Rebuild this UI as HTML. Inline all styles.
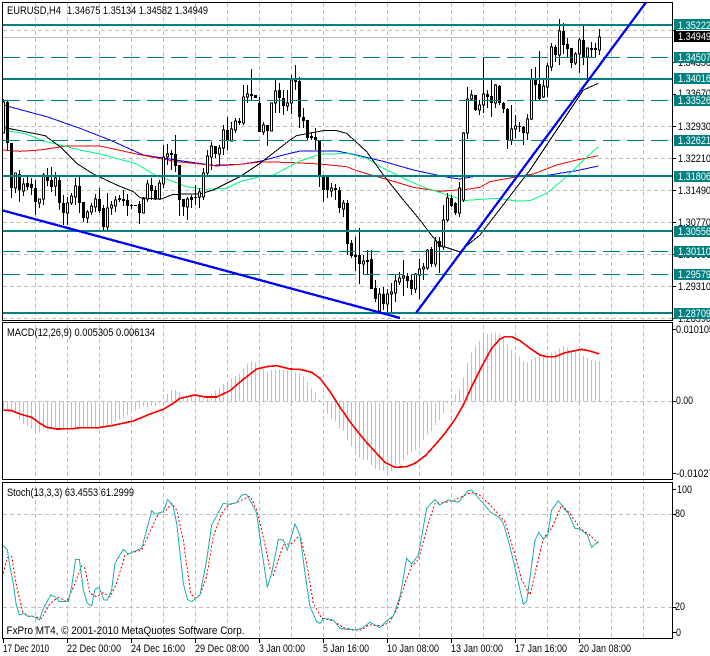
<!DOCTYPE html>
<html><head><meta charset="utf-8"><style>
html,body{margin:0;padding:0;background:#fff;width:710px;height:656px;overflow:hidden}
svg{display:block}
text{font-family:"Liberation Sans",sans-serif;font-size:11px;fill:#000}
.w{fill:#fff}
</style></head><body>
<svg width="710" height="656" viewBox="0 0 710 656" xmlns="http://www.w3.org/2000/svg">
<defs><clipPath id="c"><rect x="3" y="3" width="669" height="317"/></clipPath></defs>
<rect width="710" height="656" fill="#fff"/>
<g shape-rendering="crispEdges" fill="none">
<!-- grids -->
<path stroke="#c0c0c0" stroke-dasharray="4 3" d="M35.5 3V638M67.5 3V638M99.5 3V638M131.5 3V638M163.5 3V638M195.5 3V638M227.5 3V638M259.5 3V638M291.5 3V638M323.5 3V638M355.5 3V638M387.5 3V638M419.5 3V638M451.5 3V638M483.5 3V638M515.5 3V638M547.5 3V638M579.5 3V638M611.5 3V638M643.5 3V638"/>
<path stroke="#c0c0c0" stroke-dasharray="4 3" d="M3 30.5H672M3 126.5H672M3 158.5H672M3 190.5H672M3 222.5H672M3 254.5H672M3 286.5H672M3 318.5H672M3 401.5H672M3 514.5H672M3 607.5H672"/>
<path stroke="#c0c0c0" d="M3 37.5H672"/>
<!-- moving averages -->
<g transform="scale(.33333)" stroke-width="3">
<path stroke="#0000ff" d="M9 315L140 350L240 385L330 420L430 465L540 482L640 496L720 493L780 484L850 465L900 453L1010 453L1060 463L1150 484L1240 510L1300 523L1350 533L1380 537L1420 530L1620 530L1660 523L1730 512L1795 498"/>
<path stroke="#ff0000" d="M9 450L60 454L120 450L200 438L300 438L400 460L450 470L530 485L600 492L650 498L720 493L780 486L860 487L960 492L1040 500L1070 512L1110 524L1160 538L1240 562L1320 574L1400 568L1440 562L1470 545L1540 532L1600 522L1670 495L1730 480L1795 467"/>
<path stroke="#00ff7f" d="M9 390L80 402L130 423L180 435L240 450L300 462L360 478L410 492L465 525L500 537L560 560L620 568L680 565L720 545L780 530L820 525L900 483L960 463L1040 460L1100 475L1150 505L1220 540L1280 565L1360 590L1390 602L1440 598L1490 595L1550 603L1590 602L1640 580L1700 530L1740 490L1795 440"/>
<path stroke="#000" d="M9 382L60 392L135 407L180 440L230 490L280 522L350 555L400 575L420 593L480 598L520 583L600 582L640 570L720 530L780 490L870 420L890 407L970 392L1010 392L1040 400L1100 455L1150 525L1210 600L1260 660L1290 700L1320 736L1380 756L1385 750L1440 705L1490 640L1590 510L1650 420L1700 345L1750 270L1795 250"/>
</g>
<!-- candle wicks -->
<path stroke="#000" d="M3.5 99V133M7.5 100V150M11.5 143V198M15.5 173V193M19.5 170V202M23.5 178V196M27.5 175V190M31.5 178V195M35.5 180V215M39.5 199V208M43.5 173V205M47.5 168V186M51.5 167V192M55.5 172V196M59.5 175V210M63.5 195V225M67.5 197V225M71.5 193V205M75.5 178V205M79.5 175V213M83.5 202V222M87.5 210V223M91.5 203V215M95.5 194V212M99.5 188V213M103.5 205V232M107.5 193V232M111.5 201V215M115.5 196V212M119.5 195V202M123.5 190V206M127.5 194V216M131.5 204V209M139.5 201V224M143.5 197V213M147.5 180V202M151.5 178V200M155.5 186V200M159.5 180V200M163.5 145V188M167.5 144V165M171.5 150V170M175.5 135V172M179.5 165V216M183.5 199V216M187.5 197V220M191.5 195V208M195.5 185V205M199.5 188V208M203.5 168V200M207.5 150V175M211.5 142V170M215.5 146V158M219.5 145V165M223.5 125V155M227.5 117V150M231.5 122V140M235.5 118V133M239.5 118V125M243.5 85V125M247.5 85V103M251.5 69V100M255.5 95V98M259.5 97V132M263.5 122V135M267.5 125V146M271.5 103V131M275.5 80V113M279.5 83V113M283.5 90V115M287.5 90V111M291.5 75V114M295.5 65V90M299.5 77V128M303.5 108V128M307.5 120V141M311.5 132V140M315.5 128V150M319.5 140V187M323.5 175V202M327.5 175V198M331.5 183V197M335.5 184V200M339.5 187V213M343.5 200V217M347.5 200V255M351.5 240V258M355.5 237V271M359.5 228V284M363.5 255V275M367.5 250V275M371.5 250V289M375.5 280V302M379.5 288V313M383.5 287V310M387.5 289V313M391.5 283V313M395.5 274V302M399.5 272V285M403.5 260V296M407.5 273V288M411.5 275V295M415.5 273V293M419.5 259V299M423.5 263V280M427.5 249V270M431.5 247V267M435.5 237V267M439.5 237V273M443.5 205V250M447.5 193V222M451.5 195V207M455.5 202V215M459.5 182V217M463.5 132V202M467.5 87V139M471.5 90V101M475.5 95V111M479.5 100V115M483.5 57V113M487.5 90V108M491.5 78V117M495.5 84V108M499.5 85V105M503.5 102V113M507.5 108V149M511.5 105V145M515.5 115V138M519.5 122V132M523.5 126V145M527.5 114V140M531.5 69V120M535.5 67V100M539.5 51V100M543.5 78V98M547.5 63V97M551.5 43V71M555.5 45V62M559.5 19V65M563.5 23V54M567.5 38V57M571.5 48V68M575.5 52V65M579.5 38V73M583.5 25V65M587.5 48V83M591.5 42V58M595.5 43V58M599.5 29V55"/>
<!-- black bodies -->
<path stroke="#000" stroke-width="3" d="M7.5 102V143M11.5 143V188M19.5 174V190M27.5 183V187M31.5 184V188M35.5 188V202M47.5 175V181M51.5 180V187M59.5 180V203M63.5 203V213M79.5 186V203M83.5 202V218M99.5 199V211M103.5 208V227M119.5 198V200M123.5 199V201M127.5 200V206M131.5 205V206M135.5 205V206M139.5 204V213M151.5 185V191M155.5 190V199M171.5 153V155M175.5 154V166M179.5 165V200M183.5 199V207M191.5 197V200M195.5 197V198M215.5 146V154M227.5 130V140M239.5 121V123M251.5 94V96M255.5 95V98M259.5 103V132M267.5 125V131M279.5 90V98M283.5 98V106M295.5 80V82M299.5 81V117M303.5 117V121M307.5 120V138M311.5 136V138M315.5 137V140M319.5 140V176M323.5 175V190M327.5 175V190M335.5 188V190M339.5 190V208M347.5 203V244M351.5 243V256M355.5 255V257M359.5 255V264M367.5 260V262M371.5 259V289M375.5 288V299M383.5 294V304M407.5 276V281M411.5 280V289M431.5 249V264M439.5 241V247M451.5 198V206M455.5 203V213M475.5 95V110M487.5 94V97M491.5 96V103M499.5 86V103M503.5 103V109M507.5 109V140M519.5 126V127M523.5 127V133M535.5 79V85M539.5 84V99M555.5 47V55M563.5 31V45M567.5 44V49M571.5 48V63M583.5 40V57M591.5 48V50M595.5 48V50"/>
<!-- white bodies -->
<path stroke="#000" fill="#fff" d="M2.5 102h2V133h-2zM14.5 173h2V188h-2zM22.5 184h2V191h-2zM38.5 199h2V203h-2zM42.5 175h2V199h-2zM54.5 178h2V186h-2zM66.5 203h2V213h-2zM70.5 196h2V203h-2zM74.5 186h2V197h-2zM86.5 212h2V218h-2zM90.5 206h2V212h-2zM94.5 199h2V207h-2zM106.5 208h2V227h-2zM110.5 205h2V208h-2zM114.5 200h2V206h-2zM142.5 199h2V213h-2zM146.5 184h2V199h-2zM158.5 183h2V199h-2zM162.5 157h2V184h-2zM166.5 154h2V157h-2zM186.5 199h2V207h-2zM198.5 192h2V197h-2zM202.5 173h2V197h-2zM206.5 156h2V173h-2zM210.5 146h2V157h-2zM218.5 148h2V154h-2zM222.5 130h2V148h-2zM230.5 129h2V141h-2zM234.5 121h2V130h-2zM242.5 97h2V123h-2zM246.5 94h2V97h-2zM262.5 125h2V132h-2zM270.5 103h2V131h-2zM274.5 91h2V103h-2zM286.5 103h2V106h-2zM290.5 80h2V103h-2zM330.5 188h2V191h-2zM342.5 203h2V209h-2zM362.5 261h2V264h-2zM378.5 294h2V311h-2zM386.5 294h2V304h-2zM390.5 292h2V294h-2zM394.5 281h2V293h-2zM398.5 278h2V282h-2zM402.5 276h2V278h-2zM414.5 274h2V289h-2zM418.5 269h2V275h-2zM422.5 267h2V269h-2zM426.5 250h2V268h-2zM434.5 241h2V264h-2zM442.5 220h2V247h-2zM446.5 198h2V220h-2zM458.5 188h2V213h-2zM462.5 133h2V200h-2zM466.5 99h2V133h-2zM470.5 95h2V99h-2zM478.5 105h2V110h-2zM482.5 94h2V105h-2zM494.5 85h2V103h-2zM510.5 129h2V140h-2zM514.5 126h2V129h-2zM526.5 119h2V133h-2zM530.5 79h2V119h-2zM542.5 86h2V97h-2zM546.5 66h2V87h-2zM550.5 47h2V67h-2zM558.5 31h2V55h-2zM574.5 54h2V63h-2zM578.5 40h2V54h-2zM586.5 48h2V57h-2zM598.5 37h2V50h-2z"/>
<!-- level lines -->
<path stroke="#008080" stroke-width="2" d="M3 25H672M3 79H672M3 176H672M3 231H672M3 313H672"/>
<path stroke="#008080" stroke-dasharray="17 7" d="M3 57.5H672M3 100.5H672M3 140.5H672M3 251.5H672M3 274.5H672"/>
<!-- trend lines -->
<g clip-path="url(#c)" stroke="#0000ff" stroke-width="2.3"><path d="M3 210.5L400 318"/><path d="M416 313L650 -3"/></g>
<!-- MACD histogram -->
<g transform="translate(0,320) scale(.33333)" stroke="#c0c0c0" stroke-width="3">
<path d="M10.5 244V270M22.5 244V270M34.5 244V272M46.5 244V280M58.5 244V300M70.5 244V312M82.5 244V318M94.5 244V325M106.5 244V330M118.5 244V338M130.5 244V325M142.5 244V322M154.5 244V322M166.5 244V325M178.5 244V328M190.5 244V328M202.5 244V328M214.5 244V328M226.5 244V326M238.5 244V325M250.5 244V324M262.5 244V324M274.5 244V322M286.5 244V322M298.5 244V320M310.5 244V318M322.5 244V316M334.5 244V312M346.5 244V305M358.5 244V298M370.5 244V292M382.5 244V285M394.5 244V280M406.5 244V272M418.5 244V265M430.5 244V260M442.5 244V262M454.5 244V258M466.5 244V258M478.5 244V250M490.5 244V245M502.5 244V222M514.5 244V210M526.5 244V208M538.5 244V218M550.5 244V230M562.5 244V232M574.5 244V228M586.5 244V225M598.5 244V230M610.5 244V235M622.5 244V233M634.5 244V222M646.5 244V212M658.5 244V204M670.5 244V192M682.5 244V185M694.5 244V175M706.5 244V168M718.5 244V160M730.5 244V145M742.5 244V130M754.5 244V125M766.5 244V128M778.5 244V140M790.5 244V145M802.5 244V155M814.5 244V150M826.5 244V148M838.5 244V148M850.5 244V150M862.5 244V152M874.5 244V152M886.5 244V158M898.5 244V160M910.5 244V170M922.5 244V185M934.5 244V205M946.5 244V218M958.5 244V240M982.5 244V280M994.5 244V296M1006.5 244V305M1018.5 244V325M1030.5 244V333M1042.5 244V360M1054.5 244V380"/>
<g transform="translate(1065,0)"><path d="M1.5 244V405M13.5 244V412M25.5 244V420M37.5 244V420M49.5 244V435M61.5 244V447M73.5 244V450M85.5 244V453M97.5 244V458M109.5 244V455M121.5 244V440M133.5 244V430M145.5 244V418M157.5 244V405M169.5 244V395M181.5 244V388M193.5 244V372M205.5 244V360M217.5 244V342M229.5 244V333M241.5 244V315M253.5 244V300M265.5 244V280M277.5 244V250M301.5 244V225M313.5 244V207M325.5 244V172M337.5 244V128M349.5 244V97M361.5 244V78M373.5 244V63M385.5 244V47M397.5 244V42M409.5 244V40M421.5 244V37M433.5 244V42M445.5 244V55M457.5 244V72M469.5 244V88M481.5 244V95M493.5 244V110M505.5 244V124M517.5 244V127M529.5 244V118M541.5 244V113M553.5 244V108M565.5 244V108M577.5 244V103M589.5 244V97M601.5 244V95M613.5 244V85M625.5 244V78M637.5 244V82M649.5 244V95M661.5 244V96M673.5 244V98M685.5 244V107M697.5 244V113M709.5 244V120M721.5 244V122M733.5 244V123"/></g>
</g>
<!-- MACD signal -->
<g transform="translate(0,320) scale(.33333)" stroke="#ff0000" stroke-width="5">
<path d="M10 270L35 272L60 282L95 292L120 310L140 322L170 327L220 326L240 323L295 323L340 316L400 303L450 282L490 268L520 250L540 235L585 225L615 231L650 231L690 212L730 178L770 147L800 140L830 137L870 147L900 148L935 157L960 175L990 215L1020 262L1050 305L1065 325L1095 362L1125 395L1155 427L1185 442L1220 440L1245 430L1275 408L1305 375L1335 340L1365 298L1390 255L1415 200L1445 140L1475 85L1500 57L1515 50L1535 50L1560 62L1590 85L1620 105L1640 110L1665 110L1695 98L1745 88L1770 93L1798 102"/>
</g>
<!-- Stochastic -->
<g transform="translate(0,480) scale(.33333)" stroke-width="3">
<path stroke="#ff0000" stroke-dasharray="6 6" d="M10 280L22 232L35 230L50 320L68 395L85 408L100 410L125 415L150 370L175 352L200 365L225 310L245 258L255 265L270 340L290 350L310 338L330 350L350 310L375 225L400 217L425 210L450 155L475 100L495 95L515 70L530 90L550 180L572 340L585 355L600 345L620 290L640 170L665 100L685 75L710 68L750 48L770 90L790 170L810 265L820 285L850 195L875 190L900 165L920 250L940 370L965 415L1000 422L1030 443L1065 450L1085 450L1105 435L1150 437L1170 425L1190 390L1215 310L1235 258L1255 240L1285 130L1305 70L1330 68L1365 60L1410 38L1435 42L1475 80L1515 125L1545 225L1565 300L1590 345L1610 260L1630 175L1655 145L1685 75L1710 100L1740 145L1765 162L1795 190"/>
<path stroke="#20b2aa" d="M10 197L22 210L30 260L40 310L48 370L58 405L72 400L85 410L97 408L118 420L130 385L152 345L165 350L178 365L205 365L215 320L227 238L238 238L250 330L262 370L275 378L285 328L297 322L312 360L322 360L335 330L345 250L370 208L385 222L400 215L425 205L440 150L455 92L465 102L490 95L503 58L520 80L530 130L550 310L562 358L575 365L600 345L620 240L635 135L670 70L685 73L710 68L725 45L740 43L755 70L770 100L785 210L802 322L815 280L835 178L850 180L862 210L885 132L900 165L915 280L930 380L950 425L960 430L970 415L1000 420L1020 445L1040 448L1065 450L1085 445L1110 427L1140 443L1160 422L1180 408L1200 350L1220 235L1235 252L1255 225L1280 85L1305 58L1318 75L1345 60L1375 67L1405 32L1415 30L1445 65L1475 100L1495 110L1510 130L1530 200L1550 285L1570 373L1580 365L1605 180L1617 157L1630 178L1643 165L1655 90L1675 62L1695 90L1705 100L1725 145L1740 147L1762 165L1775 202L1795 184"/>
</g>
<!-- frames -->
<path stroke="#000" d="M2.5 2.5H672.5V320.5H2.5zM2.5 322.5H672.5V479.5H2.5zM2.5 482.5H672.5V638.5H2.5z"/>
<!-- ticks -->
<path stroke="#000" d="M673 30.5h3M673 62.5h3M673 94.5h3M673 126.5h3M673 158.5h3M673 190.5h3M673 222.5h3M673 254.5h3M673 286.5h3M673 318.5h3M673 329.5h3M673 401.5h3M673 473.5h3M673 489.5h3M673 514.5h3M673 607.5h3M673 632.5h3M3.5 639v4M67.5 639v4M131.5 639v4M195.5 639v4M259.5 639v4M323.5 639v4M387.5 639v4M451.5 639v4M515.5 639v4M579.5 639v4"/>
</g>
<!-- axis labels -->
<text x="678" y="66" textLength="33" lengthAdjust="spacingAndGlyphs">1.34350</text>
<text x="678" y="97" textLength="33" lengthAdjust="spacingAndGlyphs">1.33670</text>
<text x="678" y="130" textLength="33" lengthAdjust="spacingAndGlyphs">1.32930</text>
<text x="678" y="162" textLength="33" lengthAdjust="spacingAndGlyphs">1.32210</text>
<text x="678" y="194" textLength="33" lengthAdjust="spacingAndGlyphs">1.31490</text>
<text x="678" y="226" textLength="33" lengthAdjust="spacingAndGlyphs">1.30770</text>
<text x="678" y="258" textLength="33" lengthAdjust="spacingAndGlyphs">1.30050</text>
<text x="678" y="290" textLength="33" lengthAdjust="spacingAndGlyphs">1.29310</text>
<text x="678" y="322" textLength="33" lengthAdjust="spacingAndGlyphs">1.28590</text>
<g fill="#008080" shape-rendering="crispEdges"><rect x="674" y="19" width="36" height="11"/><rect x="674" y="52" width="36" height="11"/><rect x="674" y="73" width="36" height="11"/><rect x="674" y="95" width="36" height="11"/><rect x="674" y="135" width="36" height="11"/><rect x="674" y="171" width="36" height="11"/><rect x="674" y="226" width="36" height="11"/><rect x="674" y="246" width="36" height="11"/><rect x="674" y="269" width="36" height="11"/><rect x="674" y="308" width="36" height="11"/></g>
<rect x="674" y="31" width="36" height="11" fill="#000" shape-rendering="crispEdges"/>
<text class="w" x="678" y="29" textLength="33" lengthAdjust="spacingAndGlyphs">1.35222</text>
<text class="w" x="678" y="40" textLength="33" lengthAdjust="spacingAndGlyphs">1.34949</text>
<text class="w" x="678" y="61" textLength="33" lengthAdjust="spacingAndGlyphs">1.34507</text>
<text class="w" x="678" y="82" textLength="33" lengthAdjust="spacingAndGlyphs">1.34016</text>
<text class="w" x="678" y="104" textLength="33" lengthAdjust="spacingAndGlyphs">1.33526</text>
<text class="w" x="678" y="144" textLength="33" lengthAdjust="spacingAndGlyphs">1.32621</text>
<text class="w" x="678" y="180" textLength="33" lengthAdjust="spacingAndGlyphs">1.31806</text>
<text class="w" x="678" y="235" textLength="33" lengthAdjust="spacingAndGlyphs">1.30556</text>
<text class="w" x="678" y="255" textLength="33" lengthAdjust="spacingAndGlyphs">1.30110</text>
<text class="w" x="678" y="278" textLength="33" lengthAdjust="spacingAndGlyphs">1.29579</text>
<text class="w" x="678" y="317" textLength="33" lengthAdjust="spacingAndGlyphs">1.28709</text>
<text x="676" y="333" textLength="38" lengthAdjust="spacingAndGlyphs">0.010105</text>
<text x="676" y="404" textLength="17" lengthAdjust="spacingAndGlyphs">0.00</text>
<text x="676" y="477" textLength="38" lengthAdjust="spacingAndGlyphs">-0.01027</text>
<text x="677" y="493" textLength="15" lengthAdjust="spacingAndGlyphs">100</text>
<text x="675" y="517" textLength="10" lengthAdjust="spacingAndGlyphs">80</text>
<text x="675" y="610" textLength="10" lengthAdjust="spacingAndGlyphs">20</text>
<text x="676" y="636" textLength="5" lengthAdjust="spacingAndGlyphs">0</text>
<!-- titles -->
<text x="7" y="14" textLength="54" lengthAdjust="spacingAndGlyphs">EURUSD,H4</text>
<text x="67" y="14" textLength="141" lengthAdjust="spacingAndGlyphs">1.34675 1.35134 1.34582 1.34949</text>
<text x="7" y="336" textLength="148" lengthAdjust="spacingAndGlyphs">MACD(12,26,9) 0.005305 0.006134</text>
<text x="7" y="496" textLength="127" lengthAdjust="spacingAndGlyphs">Stoch(13,3,3) 63.4553 61.2999</text>
<text x="6.5" y="634" textLength="238" lengthAdjust="spacingAndGlyphs">FxPro MT4, © 2001-2010 MetaQuotes Software Corp.</text>
<!-- dates -->
<text x="3" y="652" textLength="46" lengthAdjust="spacingAndGlyphs">17 Dec 2010</text>
<text x="67" y="652" textLength="54" lengthAdjust="spacingAndGlyphs">22 Dec 00:00</text>
<text x="131" y="652" textLength="54" lengthAdjust="spacingAndGlyphs">24 Dec 16:00</text>
<text x="195" y="652" textLength="54" lengthAdjust="spacingAndGlyphs">29 Dec 08:00</text>
<text x="259" y="652" textLength="46" lengthAdjust="spacingAndGlyphs">3 Jan 00:00</text>
<text x="323" y="652" textLength="46" lengthAdjust="spacingAndGlyphs">5 Jan 16:00</text>
<text x="387" y="652" textLength="52" lengthAdjust="spacingAndGlyphs">10 Jan 08:00</text>
<text x="451" y="652" textLength="52" lengthAdjust="spacingAndGlyphs">13 Jan 00:00</text>
<text x="515" y="652" textLength="52" lengthAdjust="spacingAndGlyphs">17 Jan 16:00</text>
<text x="579" y="652" textLength="52" lengthAdjust="spacingAndGlyphs">20 Jan 08:00</text>
</svg>
</body></html>
